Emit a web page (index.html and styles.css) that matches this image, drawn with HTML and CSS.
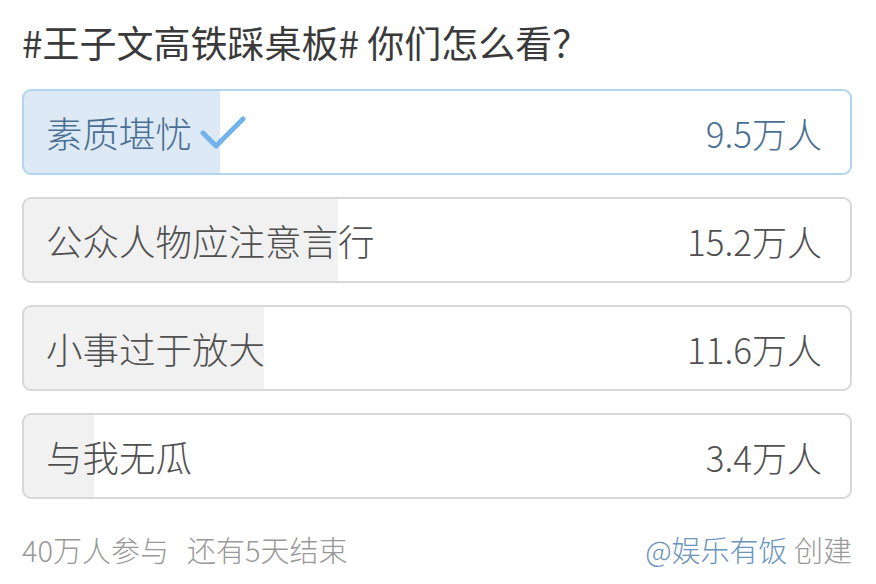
FILE: index.html
```html
<!DOCTYPE html>
<html lang="zh-CN">
<head>
<meta charset="utf-8">
<title>投票</title>
<link rel="stylesheet" href="styles.css">
</head>
<body>
<div class="poll">
  <h1 class="title">#王子文高铁踩桌板# 你们怎么看？</h1>
  <div class="options">
    <div class="option selected" style="--p:23.75%">
      <span class="label">素质堪忧<svg class="check" width="46" height="36" viewBox="0 0 46 36"><path d="M3 18 L16 31 L43 4" fill="none" stroke="#71b3ea" stroke-width="5" stroke-linecap="round" stroke-linejoin="round"/></svg></span>
      <span class="count">9.5万人</span>
    </div>
    <div class="option" style="--p:38%">
      <span class="label">公众人物应注意言行</span>
      <span class="count">15.2万人</span>
    </div>
    <div class="option" style="--p:29%">
      <span class="label">小事过于放大</span>
      <span class="count">11.6万人</span>
    </div>
    <div class="option" style="--p:8.5%">
      <span class="label">与我无瓜</span>
      <span class="count">3.4万人</span>
    </div>
  </div>
  <div class="footer">
    <div class="stats"><span>40万人参与</span><span class="remain">还有5天结束</span></div>
    <div class="creator"><span class="user">@娱乐有饭</span> 创建</div>
  </div>
</div>
</body>
</html>
```
FILE: styles.css
```css
html, body {
  margin: 0;
  padding: 0;
  background: #ffffff;
}
body {
  font-family: "Noto Sans CJK SC", "Noto Sans", sans-serif;
  font-weight: 300;
}
.poll {
  padding: 17px 24px 0 22px;
  display: flex;
  flex-direction: column;
}
.title {
  margin: 0;
  font-size: 37px;
  font-weight: 400;
  line-height: 50px;
  color: #3a3a3a;
  white-space: nowrap;
}
.options {
  margin-top: 22px;
  display: flex;
  flex-direction: column;
  gap: 22px;
}
.option {
  height: 86px;
  box-sizing: border-box;
  border: 2px solid #d8d8d8;
  border-radius: 9px;
  display: flex;
  align-items: center;
  justify-content: space-between;
  padding: 0 28px 0 22px;
  font-size: 35px;
  color: #505050;
  background: linear-gradient(to right, #f1f1f1 0, #f1f1f1 var(--p), #ffffff var(--p), #ffffff 100%);
}
.option.selected {
  border-color: #b2d4ec;
  color: #4a6f92;
  background: linear-gradient(to right, #dde9f5 0, #dde9f5 var(--p), #ffffff var(--p), #ffffff 100%);
}
.label {
  display: flex;
  align-items: center;
  font-size: 36.5px;
}
.check {
  margin-left: 8px;
  margin-top: 2px;
}
.count {
  white-space: nowrap;
}
.footer {
  margin-top: 30px;
  display: flex;
  justify-content: space-between;
  align-items: center;
  line-height: 40px;
  font-size: 29px;
  color: #999999;
}
.remain {
  margin-left: 18px;
}
.user {
  color: #6a94bb;
}
```
